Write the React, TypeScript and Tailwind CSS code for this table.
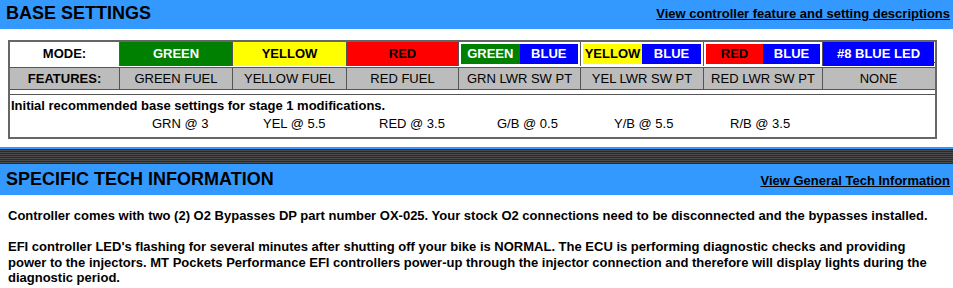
import React from 'react';

const cols = 'grid grid-cols-[110px_113px_114px_112px_122px_123px_119px_111px]';

const Split = ({ a, aCls, b }: { a: string; aCls: string; b: string }) => (
  <div className="bg-white p-[2px] flex">
    <div className={`flex-1 flex items-center justify-center ${aCls}`}>{a}</div>
    <div className="flex-1 flex items-center justify-center bg-[#0000ff] text-white">{b}</div>
  </div>
);

const SectionHead = ({ title, link }: { title: string; link: string }) => (
  <div className="bg-[#3399ff] flex items-center justify-between pl-[6px] pr-[3px]">
    <h2 className="text-[18px] font-bold text-black">{title}</h2>
    <a href="#" className="text-[13px] font-bold text-black underline pt-[2px]">
      {link}
    </a>
  </div>
);

export default function App() {
  const features = ['GREEN FUEL', 'YELLOW FUEL', 'RED FUEL', 'GRN LWR SW PT', 'YEL LWR SW PT', 'RED LWR SW PT', 'NONE'];
  const settings = [
    { t: 'GRN @ 3', w: 'w-[111px]' },
    { t: 'YEL @ 5.5', w: 'w-[116px]' },
    { t: 'RED @ 3.5', w: 'w-[118px]' },
    { t: 'G/B @ 0.5', w: 'w-[117px]' },
    { t: 'Y/B @ 5.5', w: 'w-[116px]' },
    { t: 'R/B @ 3.5', w: 'w-[116px]' },
  ];

  return (
    <div className="w-[953px] h-[288px] bg-white overflow-hidden font-['Liberation_Sans',Arial,sans-serif] text-black">
      <div className="h-[29px] flex flex-col justify-center pb-[3px] bg-[#3399ff]">
        <SectionHead title="BASE SETTINGS" link="View controller feature and setting descriptions" />
      </div>

      <div className="mt-[11px] ml-[8px] w-[929px] border-2 border-[#666]">
        <div className={`${cols} h-[21px] divide-x divide-[#555] border-b border-[#555] text-[13px] font-bold`}>
          <div className="flex items-center justify-center bg-white">MODE:</div>
          <div className="flex items-center justify-center bg-[#008000] text-white">GREEN</div>
          <div className="flex items-center justify-center bg-[#ffff00]">YELLOW</div>
          <div className="flex items-center justify-center bg-[#ff0000]">RED</div>
          <Split a="GREEN" aCls="bg-[#008000] text-white" b="BLUE" />
          <Split a="YELLOW" aCls="bg-[#ffff00]" b="BLUE" />
          <Split a="RED" aCls="bg-[#ff0000]" b="BLUE" />
          <div className="flex items-center justify-center bg-[#0000ff] text-white">#8 BLUE LED</div>
        </div>
        <div className="h-[5px] border-b border-[#555]" />
        <div className={`${cols} h-[22px] divide-x divide-[#555] border-b border-[#555] bg-[#bcbcbc] text-[13px]`}>
          <div className="flex items-center justify-center font-bold">FEATURES:</div>
          {features.map((f) => (
            <div key={f} className="flex items-center justify-center">
              {f}
            </div>
          ))}
        </div>
        <div className="h-[5px] border-b border-[#555]" />
        <div className="h-[42px] px-[1px] pt-[2px] text-[13px]">
          <p className="font-bold leading-[17px]">Initial recommended base settings for stage 1 modifications.</p>
          <div className="flex pl-[141px] mt-[1px] leading-[17px]">
            {settings.map((s) => (
              <span key={s.t} className={s.w}>
                {s.t}
              </span>
            ))}
          </div>
        </div>
      </div>

      <div className="mt-[8px] h-[2px] bg-[#3399ff]" />
      <div className="h-[15px] bg-[repeating-linear-gradient(to_bottom,#2b2b2b_0px,#2b2b2b_1px,#4a4a4a_1px,#4a4a4a_2px)]" />
      <div className="h-[31px] flex flex-col justify-center bg-[#3399ff]">
        <SectionHead title="SPECIFIC TECH INFORMATION" link="View General Tech Information" />
      </div>

      <div className="px-[8px] pt-[13px] text-[13px] font-bold leading-[15.5px]">
        <p>
          Controller comes with two (2) O2 Bypasses DP part number OX-025. Your stock O2 connections need to be
          disconnected and the bypasses installed.
        </p>
        <p className="mt-[15.5px]">
          EFI controller LED's flashing for several minutes after shutting off your bike is NORMAL. The ECU is
          performing diagnostic checks and providing power to the injectors. MT Pockets Performance EFI controllers
          power-up through the injector connection and therefore will display lights during the diagnostic period.
        </p>
      </div>
    </div>
  );
}
